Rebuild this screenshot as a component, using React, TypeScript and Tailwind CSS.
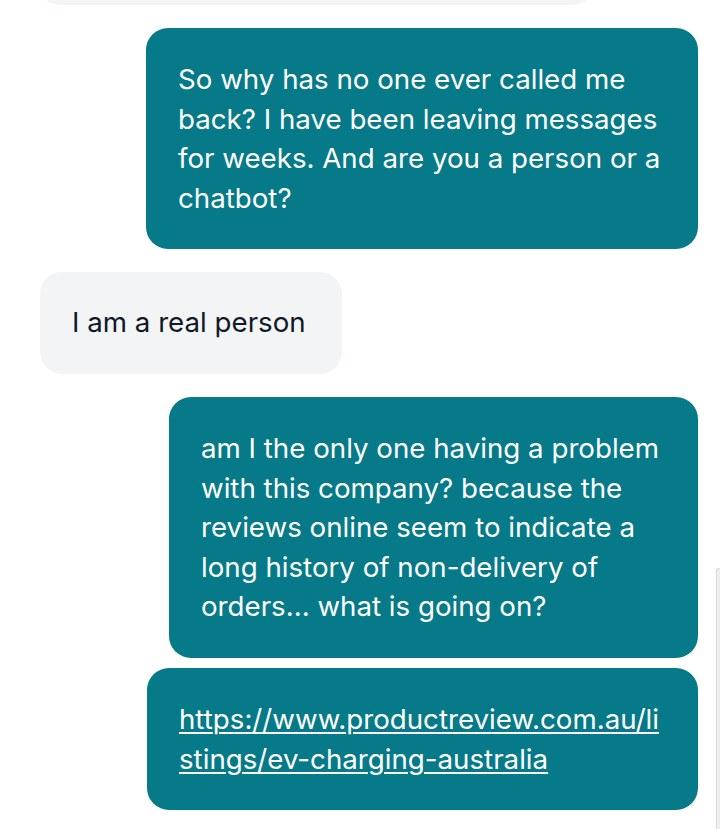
import React from "react";

type Msg = { from: "me" | "agent"; width: string; text?: string; link?: string[] };

const messages: Msg[] = [
  {
    from: "me",
    width: "w-[552px]",
    text: "So why has no one ever called me back? I have been leaving messages for weeks. And are you a person or a chatbot?",
  },
  { from: "agent", width: "w-[302px]", text: "I am a real person" },
  {
    from: "me",
    width: "w-[529px]",
    text: "am I the only one having a problem with this company? because the reviews online seem to indicate a long history of non-delivery of orders... what is going on?",
  },
  {
    from: "me",
    width: "w-[551px]",
    link: ["https://www.productreview.com.au/li", "stings/ev-charging-australia"],
  },
];

function Bubble({ msg }: { msg: Msg }) {
  const mine = msg.from === "me";
  return (
    <div className={mine ? "flex justify-end" : "flex justify-start"}>
      <div
        className={
          (mine
            ? "rounded-[22px] bg-[#067a88] pl-[32px] pr-[20px] pt-[32px] pb-[31px] text-white "
            : "rounded-[22px] bg-[#f3f4f6] pl-[32px] pr-[20px] pt-[31px] pb-[31px] text-[#111827] ") + msg.width
        }
      >
        {msg.link ? (
          <a href="#" className="block underline underline-offset-[3px] decoration-[1.5px]">
            {msg.link[0]}
            <br />
            {msg.link[1]}
          </a>
        ) : (
          <p>{msg.text}</p>
        )}
      </div>
    </div>
  );
}

export default function App() {
  return (
    <div
      className="relative h-[829px] w-[720px] overflow-hidden bg-white text-[27.7px] leading-[39.6px]"
      style={{ fontFamily: "Inter, 'Noto Sans', sans-serif" }}
    >
      <div className="flex flex-col pl-[40px] pr-[22px]">
        {/* tail of the previous agent message */}
        <div className="-mt-[40px] ml-[-2px] h-[45px] w-[557px] rounded-[22px] bg-[#f3f4f6]" />
        <div className="mt-[23px] flex flex-col">
          <Bubble msg={messages[0]} />
          <div className="mt-[23px]">
            <Bubble msg={messages[1]} />
          </div>
          <div className="mt-[23px]">
            <Bubble msg={messages[2]} />
          </div>
          <div className="mt-[10px]">
            <Bubble msg={messages[3]} />
          </div>
        </div>
      </div>
      {/* scrollbar thumb */}
      <div className="absolute right-0 top-[568px] h-[270px] w-[4px] rounded-tl-[3px] border-l border-t border-[#d9dbe0] bg-[#eceef1]" />
    </div>
  );
}
